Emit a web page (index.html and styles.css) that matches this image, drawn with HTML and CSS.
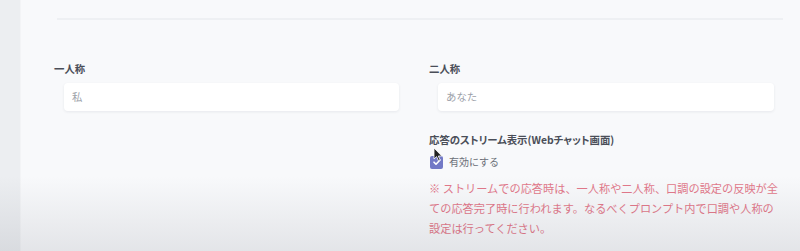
FILE: index.html
```html
<!DOCTYPE html>
<html lang="ja">
<head>
<meta charset="utf-8">
<link rel="stylesheet" href="styles.css">
</head>
<body>
<div class="app">
  <div class="sidebar"></div>
  <div class="main">
    <hr class="divider">
    <div class="grid">
      <div class="field">
        <div class="label">一人称</div>
        <div class="input">私</div>
      </div>
      <div class="field">
        <div class="label">二人称</div>
        <div class="input">あなた</div>
        <div class="label label-stream">応答のストリーム表示(Webチャット画面)</div>
        <div class="check-row">
          <span class="checkbox">
            <svg viewBox="0 0 12 12" width="12" height="12"><path d="M3 6.2 L5 8.2 L9 4" fill="none" stroke="#fff" stroke-width="1.6" stroke-linecap="round" stroke-linejoin="round"/></svg>
          </span>
          <span class="check-label">有効にする</span>
        </div>
        <p class="note">※ ストリームでの応答時は、一人称や二人称、口調の設定の反映が全ての応答完了時に行われます。なるべくプロンプト内で口調や人称の設定は行ってください。</p>
      </div>
    </div>
  </div>
  <svg class="cursor" viewBox="0 0 10 16" width="10" height="16"><path d="M1 1 L1 12 L3.6 9.6 L5.6 14 L7.2 13.2 L5.3 9 L8.8 9 Z" fill="#222" stroke="#fff" stroke-width="0.8"/></svg>
  <div class="shade"></div>
</div>
</body>
</html>
```
FILE: styles.css
```css
* { box-sizing: border-box; }
html, body { margin: 0; padding: 0; }
body {
  width: 800px;
  height: 251px;
  overflow: hidden;
  font-family: "Noto Sans CJK JP", "Noto Sans", sans-serif;
  background: #f8f9fb;
}
.app {
  position: relative;
  display: flex;
  width: 800px;
  height: 251px;
}
.sidebar {
  width: 21px;
  background: #eceef1;
  border-right: 1px solid #f3f4f6;
}
.main {
  flex: 1;
  background: #f8f9fb;
  padding-top: 18px;
}
.divider {
  margin: 0 17px 0 36px;
  border: 0;
  border-top: 2px solid #eef0f3;
  height: 0;
}
.grid {
  display: grid;
  grid-template-columns: 345px 355px;
  column-gap: 30px;
  padding-left: 33px;
  margin-top: 42px;
}
.field { display: flex; flex-direction: column; }
.label {
  font-size: 10.4px;
  line-height: 14px;
  font-weight: 700;
  color: #4a4e58;
}
.input {
  margin-top: 7px;
  margin-left: 10px;
  width: 335px;
  height: 28px;
  background: #fff;
  border-radius: 4px;
  box-shadow: 0 1px 3px rgba(30, 40, 60, 0.08);
  font-size: 10.4px;
  line-height: 28px;
  padding-left: 8px;
  color: #9ca1a9;
}
.field:nth-child(2) .input { margin-left: 9px; width: 336px; }
.label-stream {
  margin-top: 22px;
  font-feature-settings: "palt";
}
.check-row {
  display: flex;
  align-items: center;
  gap: 6px;
  margin-top: 8px;
  margin-left: 1px;
  height: 14px;
}
.checkbox {
  width: 13px;
  height: 13px;
  border-radius: 2px;
  background: #7279c6;
  display: flex;
  align-items: center;
  justify-content: center;
}
.check-label {
  font-size: 10px;
  line-height: 14px;
  color: #6b6f78;
}
.note {
  margin: 9px 0 0 0;
  font-size: 11.2px;
  line-height: 20px;
  color: #e2788a;
}
.cursor {
  position: absolute;
  left: 433px;
  top: 147px;
}
.shade {
  position: absolute;
  left: 0;
  right: 0;
  top: 176px;
  bottom: 0;
  background: linear-gradient(to bottom, rgba(60, 65, 80, 0), rgba(60, 65, 80, 0.11));
  pointer-events: none;
}
```
